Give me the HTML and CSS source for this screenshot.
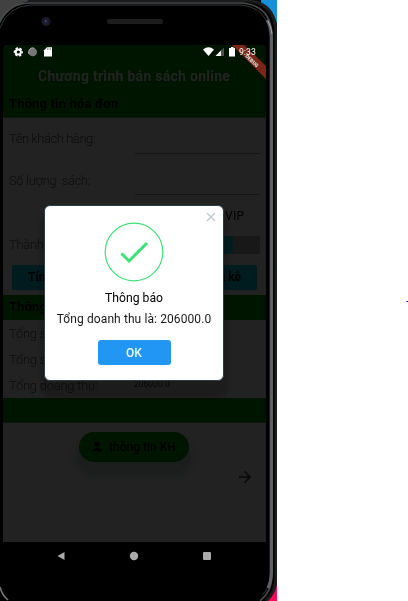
FILE: index.html
```html
<!DOCTYPE html>
<html lang="vi">
<head>
<meta charset="utf-8">
<title>Chương trình bán sách online</title>
<link rel="stylesheet" href="styles.css">
</head>
<body>
<div class="phone">
  <svg class="frame" width="277" height="601" viewBox="0 0 277 601">
    <path d="M0 0H277V601H0Z" fill="#000"/>
    <path d="M0 0H36Q10 3 0 23Z" fill="#414141"/>
    <path d="M261 0H277V24Q273 9 261 4Z" fill="#1690d8"/>
    <path d="M277 582V601H267Q276 593 277 582Z" fill="#ff0859"/>
    <path d="M28 .5H244Q276 1 276 34V577Q276 592 266 601" fill="none" stroke="#1b1c1c" stroke-width="3"/>
    <path d="M-1 24Q7 3 31 3H240Q271 4 272 36V576Q272 591 260 601" fill="none" stroke="#494b4d" stroke-width="1.600"/>
    <path d="M0 28Q8 6 31 5H240Q268 7 270 36V574Q270 588 262 595" fill="none" stroke="#343638" stroke-width="1"/>
    <path d="M267 20Q272 27 271.500 42V572Q271 582 268 588" fill="none" stroke="#606164" stroke-width="3"/>
    <path d="M268 21Q271 26 272 34" fill="none" stroke="#a0a2a4"/>
    <path d="M0 587Q2 595 8 600" fill="none" stroke="#77797a" stroke-width="1.500"/>
    <circle cx="46" cy="21.500" r="4.500" fill="#171a22"/><circle cx="46" cy="21.500" r="2" fill="#20264c"/><circle cx="45.500" cy="21" r=".7" fill="#4c5688"/>
    <rect x="107" y="19" width="56" height="5" rx="2" fill="#1c1c1c"/>
  </svg>
  <div class="screen">
    <header class="top">
      <div class="status">
        <svg class="left-icons" width="42" height="12" viewBox="0 0 42 12">
          <circle cx="5.300" cy="7" r="2.600" fill="none" stroke="#fff" stroke-width="2"/>
          <circle cx="5.300" cy="7" r="4" fill="none" stroke="#fff" stroke-width="1.300" stroke-dasharray="2.500 1.689" stroke-dashoffset="1.250"/>
          <circle cx="19.700" cy="7" r="4.300" fill="#777"/><path d="M16 9A4.300 4.300 0 0 1 21 3" fill="none" stroke="#aaa"/>
          <path d="M34 2.300H39V11.500H31V5.300Z" fill="#fff"/><path d="M34.500 3V5M36 3V5M37.500 3V5" stroke="#777" stroke-width=".6"/>
        </svg>
        <svg class="right-icons" width="34" height="12" viewBox="0 0 34 12">
          <path d="M0 4.500Q5.500 0 11 4.500L5.500 11Z" fill="#fff"/>
          <path d="M21 2.500V11H12.500Z" fill="#4c554c"/><path d="M18 5.500V11H12.500Z" fill="#fff"/>
          <path d="M26 3H28V2H30.500V3H32V11.500H26Z" fill="#fff"/>
        </svg>
        <span class="clock">9:33</span>
      </div>
      <h1>Chương trình bán sách online</h1>
      <h2>Thông tin hóa đơn</h2>
    </header>
    <div class="field"><label>Tên khách hàng:</label><i></i></div>
    <div class="field second"><label>Số lượng&nbsp; sách:</label><i></i></div>
    <div class="vip">VIP</div>
    <div class="price"><span>Thành tiền:</span><b><em></em></b></div>
    <div class="actions"><span class="calc">Tính TT</span><span class="stats">Thống kê</span></div>
    <h2 class="section">Thông tin</h2>
    <div class="row"><span>Tổng số KH:</span></div>
    <div class="row"><span>Tổng số KH VIP:</span></div>
    <div class="row last"><span>Tổng doang thu:</span><small>206000.0</small></div>
    <div class="band"></div>
    <main class="bottom">
      <div class="pill">
        <svg width="12" height="12" viewBox="0 0 12 12"><circle cx="6" cy="3.300" r="2.500"/><path d="M1 10.500V9Q3 7 6 7T11 9V10.500Z"/></svg>
        <span>thông tin KH</span>
      </div>
      <svg class="arrow" width="14" height="14" viewBox="0 0 14 14"><path d="M1 7H12M6.500 1.500L12 7L6.500 12.500"/></svg>
    </main>
    <nav>
      <svg width="264" height="28" viewBox="0 0 264 28"><path d="M54.500 14L61.500 10V18Z"/><circle cx="131" cy="14" r="4.200"/><rect x="200" y="10" width="8" height="8" rx="1"/></svg>
    </nav>
    <svg class="debug" width="34" height="34" viewBox="0 0 34 34"><path d="M0 0H12L34 21V34Z" fill="#7c1218"/><text x="13" y="11.500" transform="rotate(44 13 11.500)">DEBUG</text></svg>
  </div>
  <section class="dialog">
    <svg class="close" width="10" height="10" viewBox="0 0 10 10"><path d="M1 1L9 9M9 1L1 9"/></svg>
    <svg class="check" width="60" height="60" viewBox="0 0 60 60"><circle cx="30" cy="30" r="28.800"/><path d="M17.500 31.500L25 39L43 21"/></svg>
    <h3>Thông báo</h3>
    <p>Tổng doanh thu là: 206000.0</p>
    <button>OK</button>
  </section>
</div>
<svg class="edge-mark" width="2" height="3" viewBox="0 0 2 3"><path d="M0 1H2V2H0Z" fill="#7878ff"/><path d="M1 1H2V2H1Z" fill="#0000b8"/></svg>
</body>
</html>
```

FILE: styles.css
```css
* { box-sizing: border-box; }
body { margin: 0; width: 408px; height: 601px; overflow: hidden; background: #fff; font-family: Roboto, sans-serif; position: relative; }
.phone { position: relative; width: 277px; height: 601px; overflow: hidden; }
.frame { position: absolute; inset: 0; }
.screen { position: relative; margin: 45px 0 0 3px; width: 263px; height: 525px; background: #222; color: #0c0c0c; border-radius: 5px 5px 0 0; overflow: hidden; display: flex; flex-direction: column; }
.top { height: 73px; flex: none; background: #001500; border-bottom: 1px solid #101510; }
.status { height: 14px; display: flex; position: relative; padding-left: 10px; }
.right-icons { margin-left: 148px; }
.clock { color: #ddd; font-size: 8.5px; font-weight: 500; line-height: 14px; margin-left: 2px; }
h1, h2, h3, p { margin: 0; }
h1 { height: 35px; padding-left: 35px; font-size: 14px; line-height: 35px; letter-spacing: .28px; color: #222422; white-space: nowrap; }
h2 { height: 24px; padding-left: 6px; font-size: 13px; line-height: 20px; letter-spacing: .15px; color: #000; white-space: nowrap; }
.field { height: 35px; flex: none; padding: 6px 6px 0; display: flex; justify-content: space-between; font-size: 13px; line-height: 30px; font-weight: 300; }
.field label { letter-spacing: -.45px; }
.field i { width: 125px; height: 1px; margin-top: 29px; background: #151515; }
.second { margin-top: 7px; height: 41px; }
.second label { font-size: 12.5px; letter-spacing: -.15px; }
.second i { margin-top: 28px; }
.vip { height: 35px; flex: none; padding: 0 0 0 222px; font-size: 12px; line-height: 30px; letter-spacing: .3px; color: #000; }
.price { height: 28px; flex: none; display: flex; padding: 0 6px; justify-content: space-between; font-size: 13px; font-weight: 300; line-height: 18px; letter-spacing: -.3px; }
.price b { width: 125px; height: 18px; background: #181818; }
.price em { display: block; width: 98px; height: 18px; background: #001e1e; }
.actions { height: 31px; flex: none; padding: 1px 9px 5px; display: flex; justify-content: space-between; font-size: 12px; font-weight: 700; line-height: 25px; color: #000; }
.actions span { width: 100px; background: #001c1e; border-radius: 2px; text-align: center; }
.actions .calc { text-align: left; padding-left: 16px; }
.actions .stats { text-align: right; padding-right: 16px; }
.section { flex: none; height: 25px; background: #001500; line-height: 24px; }
.row { height: 26px; flex: none; display: flex; padding: 0 6px; font-size: 13px; line-height: 27px; font-weight: 300; }
.row span { width: 125px; letter-spacing: -.25px; }
.row small { font-size: 8.5px; line-height: 25px; color: #080808; font-weight: 400; }
.band { height: 25px; flex: none; background: #001500; border-bottom: 1px solid #101510; }
.bottom { height: 119px; flex: none; padding: 9px 14px 0 76px; }
.pill { width: 110px; height: 30px; border-radius: 15px; background: #001500; display: flex; align-items: center; gap: 6px; padding-left: 12px; color: #000; font-size: 12px; font-weight: 500; white-space: nowrap; box-shadow: 0 10px 5px 3px #1c1e1e; }
.pill svg { fill: #000; }
.arrow { display: block; margin: 8px 0 0 auto; fill: none; stroke: #080808; stroke-width: 1.5; }
nav { height: 29px; background: #000; flex: none; }
nav svg { display: block; fill: #aaa; }
.debug { position: absolute; right: 0; top: 0; mix-blend-mode: screen; }
.debug text { font: 900 5px Roboto, sans-serif; fill: #ddd; }
.dialog { position: absolute; left: 44px; top: 205px; width: 180px; height: 176px; border: 1px solid #293e45; border-radius: 6px; background: #fff; box-shadow: 0 13px 3px 4px #00000026; color: #181818; display: flex; flex-direction: column; align-items: center; padding-top: 16px; }
.close { position: absolute; right: 7px; top: 6px; stroke: #c2c9d1; stroke-width: 1.5; }
.check { fill: none; stroke: #3ce276; stroke-width: 1.2; flex: none; }
.check path { stroke-width: 3; }
h3 { font-size: 12.2px; line-height: 18px; margin-top: 7px; font-weight: 400; letter-spacing: 0; color: #000; }
p { font-size: 12px; line-height: 18px; margin-top: 3px; letter-spacing: .1px; white-space: nowrap; }
button { width: 73px; height: 25px; border: 0; border-radius: 3px; padding: 0; margin-top: 12px; background: #2196f3; color: #f2f9ff; font: 500 12px Roboto, sans-serif; flex: none; }
.edge-mark { position: absolute; left: 406px; top: 300px; }
```
